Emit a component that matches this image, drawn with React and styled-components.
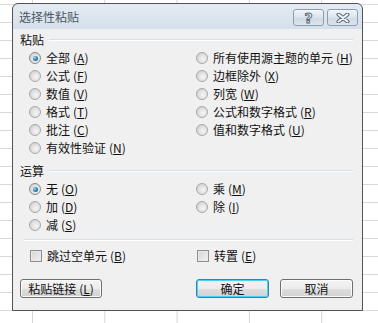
import React from 'react';
import styled, { createGlobalStyle, css } from 'styled-components';

const GlobalStyle = createGlobalStyle`
  html, body {
    margin: 0;
    padding: 0;
  }
  body {
    width: 378px;
    height: 323px;
    overflow: hidden;
    font-family: "Noto Sans CJK SC", "Noto Sans", sans-serif;
    font-size: 12px;
    color: #111;
    background-color: #fff;
    background-image:
      linear-gradient(to right, #d4d4d4 1px, transparent 1px),
      linear-gradient(to bottom, #d9d9d9 1px, transparent 1px);
    background-size: 72.3px 18px, 72.3px 18px;
    background-position: 32px 0, 0 4px;
  }
`;

const paste = [
  ['全部', 'A', true],
  ['所有使用源主题的单元', 'H'],
  ['公式', 'F'],
  ['边框除外', 'X'],
  ['数值', 'V'],
  ['列宽', 'W'],
  ['格式', 'T'],
  ['公式和数字格式', 'R'],
  ['批注', 'C'],
  ['值和数字格式', 'U'],
  ['有效性验证', 'N'],
];

const ops = [
  ['无', 'O', true],
  ['乘', 'M'],
  ['加', 'D'],
  ['除', 'I'],
  ['减', 'S'],
];

const Label = ({ text, k }) => (
  <span>
    {text}
    <Key>(<u>{k}</u>)</Key>
  </span>
);

const App = () => {
  return (
    <>
      <GlobalStyle />
      <Window>
        <TitleBar>
          <Title>选择性粘贴</Title>
          <CaptionButtons>
            <CapButton>
              <Help>?</Help>
            </CapButton>
            <CapButton>
              <svg width="14" height="10" viewBox="0 0 14 10">
                <path
                  d="M2.5 1.5 L11.5 8.5 M11.5 1.5 L2.5 8.5"
                  stroke="#5b6b7c"
                  strokeWidth="4"
                  strokeLinecap="round"
                />
                <path
                  d="M2.5 1.5 L11.5 8.5 M11.5 1.5 L2.5 8.5"
                  stroke="#f4f6f8"
                  strokeWidth="2"
                  strokeLinecap="round"
                />
              </svg>
            </CapButton>
          </CaptionButtons>
        </TitleBar>
        <Body>
          <GroupHead>
            <span>粘贴</span>
            <Rule />
          </GroupHead>
          <OptionGrid>
            {paste.map(([t, k, on]) => (
              <Option key={k}>
                <Radio $checked={on} />
                <Label text={t} k={k} />
              </Option>
            ))}
          </OptionGrid>
          <GroupHead $top={5}>
            <span>运算</span>
            <Rule />
          </GroupHead>
          <OptionGrid>
            {ops.map(([t, k, on]) => (
              <Option key={k}>
                <Radio $checked={on} />
                <Label text={t} k={k} />
              </Option>
            ))}
          </OptionGrid>
          <Separator />
          <OptionGrid $checks>
            <Option>
              <Check />
              <Label text="跳过空单元" k="B" />
            </Option>
            <Option>
              <Check />
              <Label text="转置" k="E" />
            </Option>
          </OptionGrid>
          <ButtonRow>
            <Button $w={82}>
              <Label text="粘贴链接" k="L" />
            </Button>
            <Spacer />
            <Button $w={73} $default>确定</Button>
            <Button $w={73}>取消</Button>
          </ButtonRow>
        </Body>
      </Window>
    </>
  );
};

const Window = styled.div`
  margin: 3px 0 0 12px;
  width: 349px;
  height: 306px;
  border: 1px solid #4e5358;
  border-radius: 6px 6px 0 0;
  background: linear-gradient(to bottom, #e3eaf2 0px, #d6e0ea 24px);
  display: flex;
  flex-direction: column;
  overflow: hidden;
`;

const TitleBar = styled.div`
  height: 25px;
  display: flex;
  align-items: center;
  justify-content: space-between;
  padding: 0 4px 0 6px;
`;

const Title = styled.div`
  font-size: 12px;
  color: #4a5663;
  line-height: 14px;
`;

const CaptionButtons = styled.div`
  display: flex;
  gap: 3px;
  margin-top: 2px;
`;

const CapButton = styled.div`
  width: 29px;
  height: 15px;
  border: 1px solid #8d9db0;
  border-radius: 3px;
  background: linear-gradient(to bottom, #f3f6f9, #dbe3ec 50%, #cfd9e4 51%, #dde5ee);
  display: flex;
  align-items: center;
  justify-content: center;
`;

const Help = styled.span`
  font-family: "DejaVu Sans", sans-serif;
  font-weight: bold;
  font-size: 14px;
  line-height: 14px;
  color: #f4f6f8;
  -webkit-text-stroke: 1px #56677a;
`;

const Body = styled.div`
  flex: 1;
  background: #f0f0f0;
  padding: 2px 9px 0 7px;
  display: flex;
  flex-direction: column;
`;

const GroupHead = styled.div`
  display: flex;
  align-items: center;
  gap: 5px;
  height: 18px;
  line-height: 18px;
  margin-top: ${(p) => p.$top || 0}px;
`;

const Rule = styled.div`
  flex: 1;
  height: 0;
  border-top: 1px solid #d5dfe5;
  border-bottom: 1px solid #fff;
`;

const Separator = styled(Rule)`
  flex: none;
  margin: 5px 0 6px 4px;
`;

const OptionGrid = styled.div`
  display: grid;
  grid-template-columns: 167px 1fr;
  grid-auto-rows: 18px;
  padding-left: ${(p) => (p.$checks ? 10 : 9)}px;
`;

const Option = styled.div`
  display: flex;
  align-items: center;
  gap: 5px;
  line-height: 18px;
  white-space: nowrap;
`;

const Key = styled.span`
  margin-left: 3px;
`;

const Radio = styled.span`
  width: 12px;
  height: 12px;
  box-sizing: border-box;
  border-radius: 50%;
  border: 1px solid #a8a8a8;
  background: radial-gradient(circle at 60% 60%, #f6f6f6 0, #e0e0e0 50%, #c6c6c6 100%);
  position: relative;
  flex: none;
  ${(p) =>
    p.$checked &&
    css`
      border-color: #8a8a8a;
      &::after {
        content: '';
        position: absolute;
        left: 2.5px;
        top: 2.5px;
        width: 5px;
        height: 5px;
        border-radius: 50%;
        background: radial-gradient(circle at 35% 35%, #a8d8f4 0, #2b7fb8 50%, #144d7a 100%);
      }
    `}
`;

const Check = styled.span`
  width: 12px;
  height: 12px;
  box-sizing: border-box;
  border: 1px solid #8f8f8f;
  background: linear-gradient(135deg, #d4d4d4, #f3f3f3);
  box-shadow: inset 0 0 0 1px #e8e8e8;
  flex: none;
`;

const ButtonRow = styled.div`
  display: flex;
  gap: 11px;
  margin-top: 14px;
`;

const Spacer = styled.div`
  flex: 1;
`;

const Button = styled.div`
  width: ${(p) => p.$w}px;
  height: 19px;
  box-sizing: border-box;
  border: 1px solid #707070;
  border-radius: 3px;
  background: linear-gradient(to bottom, #f4f4f4 0%, #ececec 50%, #dedede 51%, #d2d2d2 100%);
  box-shadow: inset 0 0 0 1px #fbfbfb;
  display: flex;
  align-items: center;
  justify-content: center;
  line-height: 17px;
  white-space: nowrap;
  ${(p) =>
    p.$default &&
    css`
      border-color: #3c7fb1;
      box-shadow: inset 0 0 0 1px #48d0f8;
    `}
`;

export default App;
